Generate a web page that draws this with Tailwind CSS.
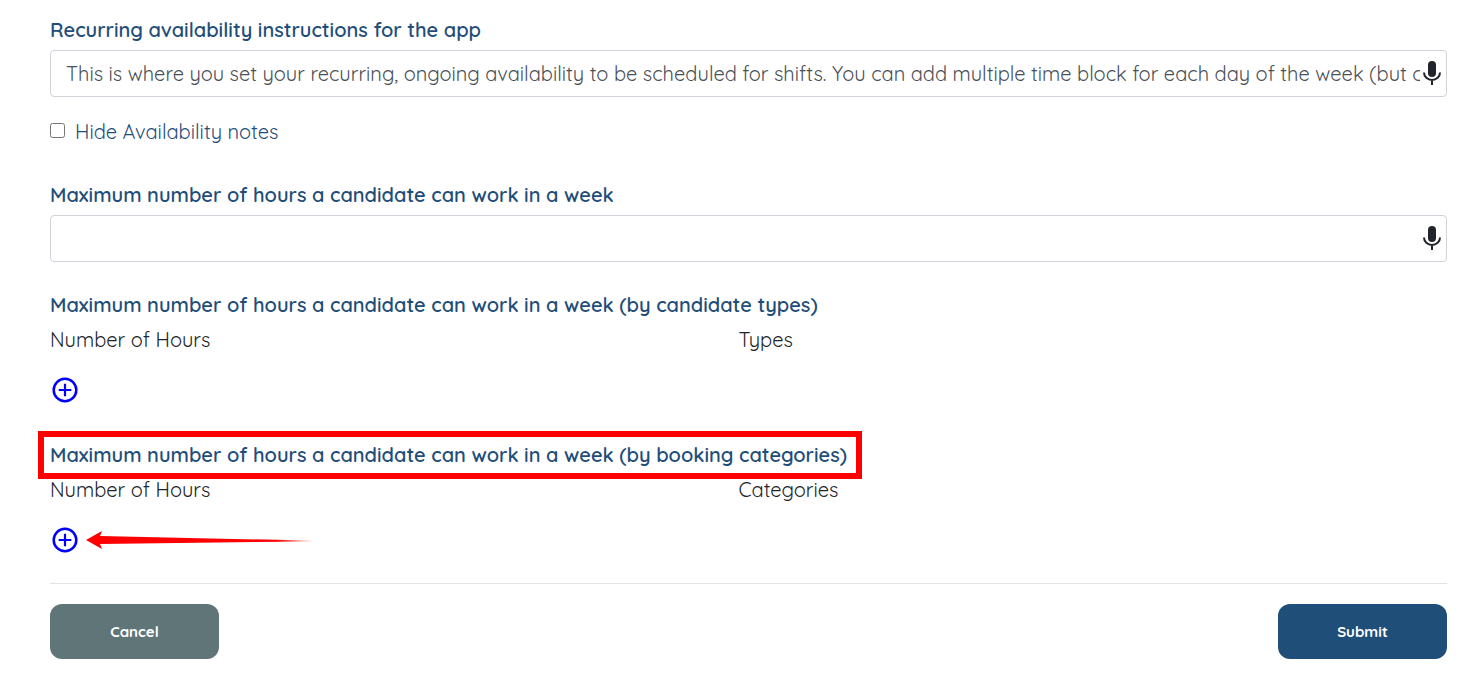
<!DOCTYPE html>
<html lang="en">

<head>
  <meta charset="UTF-8" />
  <meta name="viewport" content="width=device-width, initial-scale=1.0" />
  <title>Availability settings</title>
  <script src="https://cdn.jsdelivr.net/npm/@tailwindcss/browser@4"></script>
</head>

<body class="bg-white font-[Quicksand,Inter,sans-serif] text-[20px] leading-[30px] font-normal text-[#212529]">
  <form class="pt-[15px] pr-7 pb-9 pl-[50px]">

    <!-- Recurring instructions -->
    <label for="instructions" class="block font-semibold text-[#1f4e79]">Recurring availability instructions for the app</label>
    <div class="relative mt-[5px]">
      <input id="instructions" type="text"
        value="This is where you set your recurring, ongoing availability to be scheduled for shifts. You can add multiple time block for each day of the week (but cannot overlap them)."
        class="block h-[47px] w-full rounded border border-[#ced4da] pr-[26px] pl-[15px] text-[#495057] focus:outline-none" />
      <button type="button" aria-label="Dictate" class="absolute top-2.5 right-1 flex h-[26px] w-[22px] items-center justify-center">
        <svg width="18" height="24" viewBox="0 0 18 24" fill="none">
          <rect x="5" y="0" width="8" height="16" rx="4" fill="#212529" />
          <path d="M1 11.5a8 7.5 0 0 0 16 0M9 19v5" stroke="#212529" stroke-width="2" />
        </svg>
      </button>
    </div>

    <div class="mt-5 flex">
      <input id="hideNotes" type="checkbox" class="mt-[6px] mr-2.5 h-[15px] w-[15px]" />
      <label for="hideNotes" class="text-[#1f4e79]">Hide Availability notes</label>
    </div>

    <!-- Weekly maximum -->
    <label for="maxHours" class="mt-[33px] block font-semibold text-[#1f4e79]">Maximum number of hours a candidate can work in a week</label>
    <div class="relative mt-[5px]">
      <input id="maxHours" type="text"
        class="block h-[47px] w-full rounded border border-[#ced4da] pr-[26px] pl-[15px] text-[#495057] focus:outline-none" />
      <button type="button" aria-label="Dictate" class="absolute top-2.5 right-1 flex h-[26px] w-[22px] items-center justify-center">
        <svg width="18" height="24" viewBox="0 0 18 24" fill="none">
          <rect x="5" y="0" width="8" height="16" rx="4" fill="#212529" />
          <path d="M1 11.5a8 7.5 0 0 0 16 0M9 19v5" stroke="#212529" stroke-width="2" />
        </svg>
      </button>
    </div>

    <!-- By candidate types -->
    <section class="mt-7">
      <h2 class="font-semibold text-[#1f4e79]">Maximum number of hours a candidate can work in a week (by candidate types)</h2>
      <div class="mt-[5px] grid grid-cols-2 pr-5">
        <span>Number of Hours</span>
        <span>Types</span>
      </div>
      <button type="button" aria-label="Add candidate type limit" class="mt-5 block h-[30px] w-[30px]">
        <svg width="30" height="30" viewBox="0 0 30 30" fill="none" stroke="#0000ff">
          <circle cx="15" cy="15" r="11.3" stroke-width="2.5" />
          <path d="M15 8.7v12.6M8.7 15h12.6" stroke-width="2.2" />
        </svg>
      </button>
    </section>

    <!-- By booking categories -->
    <section class="mt-[35px]">
      <h2 class="relative w-fit font-semibold text-[#1f4e79]">
        Maximum number of hours a candidate can work in a week (by booking categories)
        <span class="absolute -inset-y-[9px] -right-[15px] -left-3 border-6 border-[#ff0000]"></span>
      </h2>
      <div class="mt-[5px] grid grid-cols-2 pr-5">
        <span>Number of Hours</span>
        <span>Categories</span>
      </div>
      <div class="mt-5 flex items-center gap-[6px]">
        <button type="button" aria-label="Add booking category limit" class="block h-[30px] w-[30px]">
          <svg width="30" height="30" viewBox="0 0 30 30" fill="none" stroke="#0000ff">
            <circle cx="15" cy="15" r="11.3" stroke-width="2.5" />
            <path d="M15 8.7v12.6M8.7 15h12.6" stroke-width="2.2" />
          </svg>
        </button>
        <svg width="226" height="20" viewBox="0 0 226 20">
          <defs>
            <linearGradient id="tail" x1="0" x2="1">
              <stop offset="0.85" stop-color="#ff0000" />
              <stop offset="1" stop-color="#ff0000" stop-opacity="0.1" />
            </linearGradient>
          </defs>
          <path d="M0 10 16 1l-2 5 211 4.6v.8L14 14l2 5z" fill="url(#tail)" />
        </svg>
      </div>
    </section>

    <div class="mt-7 flex justify-between border-t border-[#e2e3e5] pt-5 text-[15px] font-bold text-white">
      <button type="button" class="h-[55px] w-[169px] rounded-xl bg-[#5f7578]">Cancel</button>
      <button type="submit" class="h-[55px] w-[169px] rounded-xl bg-[#1f4e79]">Submit</button>
    </div>
  </form>
</body>

</html>
